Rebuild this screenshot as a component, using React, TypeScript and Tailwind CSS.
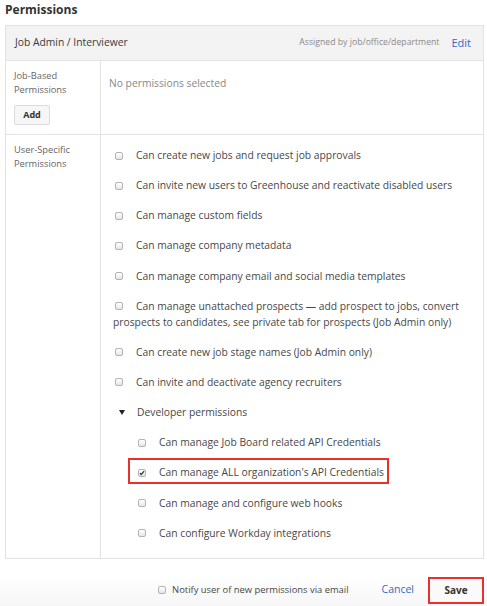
import React from "react";

const font = { fontFamily: '"Open Sans", "Liberation Sans", sans-serif' };

function Box({ checked = false }: { checked?: boolean }) {
  return (
    <span className="relative inline-block h-[8px] w-[8px] shrink-0 rounded-[2px] border border-[#b3b3b3] bg-gradient-to-b from-white to-[#e6e6e6] align-[-0.5px]">
      {checked && (
        <svg
          viewBox="0 0 8 8"
          className="absolute left-[0px] top-[0px] h-[6px] w-[6px]"
        >
          <path
            d="M1.2 4.2 L3 6 L6.8 1.6"
            fill="none"
            stroke="#333"
            strokeWidth="1.6"
          />
        </svg>
      )}
    </span>
  );
}

const userPerms = [
  "Can create new jobs and request job approvals",
  "Can invite new users to Greenhouse and reactivate disabled users",
  "Can manage custom fields",
  "Can manage company metadata",
  "Can manage company email and social media templates",
  "Can manage unattached prospects — add prospect to jobs, convert prospects to candidates, see private tab for prospects (Job Admin only)",
  "Can create new job stage names (Job Admin only)",
  "Can invite and deactivate agency recruiters",
];

const devPerms = [
  { label: "Can manage Job Board related API Credentials", checked: false },
  { label: "Can manage ALL organization's API Credentials", checked: true },
  { label: "Can manage and configure web hooks", checked: false },
  { label: "Can configure Workday integrations", checked: false },
];

export default function App() {
  return (
    <div className="h-[606px] w-[487px] bg-white" style={font}>
      <div className="h-[25px] pl-[5px] pt-[2px] text-[12px] font-bold leading-[16px] text-[#333]">
        Permissions
      </div>
      <div className="ml-[5px] w-[479px] border border-[#e2e2e2]">
        <div className="flex h-[35px] items-center border-b border-[#e2e2e2] bg-[#f3f3f3] pl-[9px] pr-[12px]">
          <span className="text-[10.3px] text-[#3a3a3a]">
            Job Admin / Interviewer
          </span>
          <span className="ml-auto text-[8.7px] text-[#8a8a8a]">
            Assigned by job/office/department
          </span>
          <span className="ml-[12px] text-[11px] text-[#2f6bc2]">Edit</span>
        </div>

        <div className="grid grid-cols-[95px_1fr] border-b border-[#e2e2e2]">
          <div className="h-[73px] border-r border-[#e2e2e2] pl-[8px] pt-[8px]">
            <div className="text-[9.3px] leading-[14px] text-[#666]">
              Job-Based
              <br />
              Permissions
            </div>
            <button className="mt-[8px] flex h-[20px] w-[36px] items-center justify-center rounded-[2px] border border-[#dcdcdc] bg-[#f6f6f6] text-[9px] font-bold text-[#333]">
              Add
            </button>
          </div>
          <div className="pl-[8px] pt-[14px] text-[10.3px] leading-[16px] text-[#888]">
            No permissions selected
          </div>
        </div>

        <div className="grid grid-cols-[95px_1fr]">
          <div className="border-r border-[#e2e2e2] pl-[8px] pt-[8px]">
            <div className="text-[9.3px] leading-[14px] text-[#666]">
              User-Specific
              <br />
              Permissions
            </div>
          </div>
          <div className="pb-[3px] pl-[12px] pr-[10px] pt-[12px] text-[10.3px] leading-[16px] text-[#474747]">
            {userPerms.map((p) => (
              <div key={p} className="mb-[14.15px]">
                <span className="ml-[2px] mr-[13px]">
                  <Box />
                </span>
                {p}
              </div>
            ))}
            <div className="mb-[14.15px] flex items-center">
              <svg
                viewBox="0 0 6 5"
                className="ml-[6px] mr-[12px] h-[5px] w-[6px]"
              >
                <path d="M0 0 H6 L3 5 Z" fill="#222" />
              </svg>
              Developer permissions
            </div>
            <div className="pl-[25px]">
              {devPerms.map((d) => (
                <div key={d.label} className="relative mb-[14.15px]">
                  {d.checked && (
                    <span className="absolute -left-[10px] -top-[6px] h-[26px] w-[261px] border-2 border-[#e8312c]" />
                  )}
                  <span className="mr-[13px]">
                    <Box checked={d.checked} />
                  </span>
                  {d.label}
                </div>
              ))}
            </div>
          </div>
        </div>
      </div>

      <div className="mt-[18px] flex items-center justify-end bg-gradient-to-b from-white to-[#f6f6f6] pb-[2px] pr-[3px]">
        <Box />
        <span className="ml-[6px] text-[9.4px] text-[#474747]">
          Notify user of new permissions via email
        </span>
        <span className="ml-[33px] text-[10.5px] text-[#2f6bc2]">Cancel</span>
        <button className="ml-[14px] flex h-[27px] w-[56px] items-center justify-center border-2 border-[#e8312c] bg-[#fafafa] text-[10px] font-bold text-[#333]">
          Save
        </button>
      </div>
    </div>
  );
}
